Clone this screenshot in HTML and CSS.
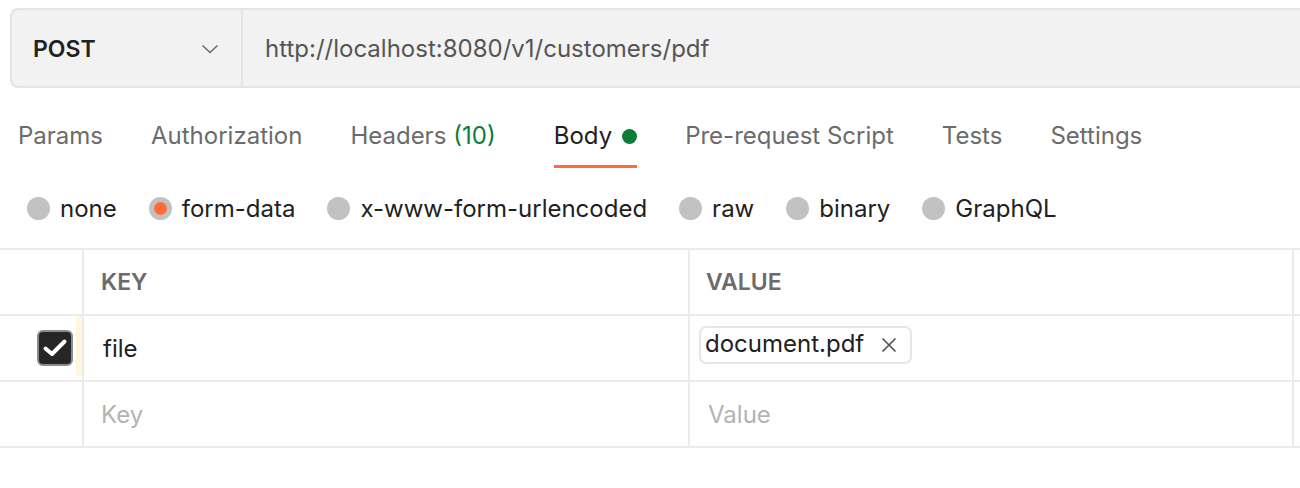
FILE: index.html
```html
<!DOCTYPE html>
<html>
<head>
<meta charset="utf-8">
<link rel="stylesheet" href="styles.css">
</head>
<body>
<div class="urlbar">
  <div class="method">
    <span class="method-name">POST</span>
    <svg class="chev" width="18" height="10" viewBox="0 0 18 10"><path d="M1.5 1.5 L9 8.5 L16.5 1.5" fill="none" stroke="#6b6b6b" stroke-width="1.6"/></svg>
  </div>
  <div class="url">http://localhost:8080/v1/customers/pdf</div>
</div>

<div class="tabs">
  <div class="tab">Params</div>
  <div class="tab">Authorization</div>
  <div class="tab headers">Headers <span class="count">(10)</span></div>
  <div class="tab active">Body <span class="dot"></span></div>
  <div class="tab">Pre-request Script</div>
  <div class="tab">Tests</div>
  <div class="tab">Settings</div>
</div>

<div class="radios">
  <label class="radio"><span class="circle"></span>none</label>
  <label class="radio"><span class="circle on"></span>form-data</label>
  <label class="radio"><span class="circle"></span>x-www-form-urlencoded</label>
  <label class="radio"><span class="circle"></span>raw</label>
  <label class="radio"><span class="circle"></span>binary</label>
  <label class="radio"><span class="circle"></span>GraphQL</label>
</div>

<div class="table">
  <div class="row head">
    <div class="cell c0"></div>
    <div class="cell c1">KEY</div>
    <div class="cell c2">VALUE</div>
    <div class="cell c3"></div>
  </div>
  <div class="row">
    <div class="cell c0"><span class="check"><svg width="26" height="20" viewBox="0 0 26 20"><path d="M3.5 10.5 L10 16 L22.5 3.5" fill="none" stroke="#fff" stroke-width="4" stroke-linecap="round" stroke-linejoin="round"/></svg></span><span class="strip"></span></div>
    <div class="cell c1 val">file</div>
    <div class="cell c2 chipcell"><span class="chip">document.pdf<svg class="x" width="16" height="16" viewBox="0 0 16 16"><path d="M1.5 1.5 L14.5 14.5 M14.5 1.5 L1.5 14.5" stroke="#555" stroke-width="1.7"/></svg></span></div>
    <div class="cell c3"></div>
  </div>
  <div class="row">
    <div class="cell c0"></div>
    <div class="cell c1 ph">Key</div>
    <div class="cell c2 ph">Value</div>
    <div class="cell c3"></div>
  </div>
</div>
</body>
</html>
```

FILE: styles.css
```css
* { box-sizing: border-box; }
body {
  margin: 0;
  background: #fff;
  font-family: Inter, "Noto Sans", "Liberation Sans", sans-serif;
  color: #212121;
  width: 1300px;
  overflow: hidden;
}
.urlbar {
  margin: 8px 0 0 10px;
  height: 80px;
  display: flex;
  background: #f2f2f2;
  border: 2px solid #e4e4e4;
  border-right: none;
  border-radius: 8px 0 0 8px;
}
.method {
  width: 231px;
  border-right: 2px solid #e4e4e4;
  display: flex;
  align-items: center;
  justify-content: space-between;
  padding: 2px 22px 0 21px;
}
.method-name {
  font-size: 23px;
  font-weight: 600;
  color: #212121;
}
.url {
  display: flex;
  align-items: center;
  padding-left: 22px;
  font-size: 24px;
  color: #555;
}
.tabs {
  display: flex;
  gap: 48px;
  padding: 33px 0 0 18px;
  height: 80px;
}
.tab {
  font-size: 24px;
  color: #6b6b6b;
  height: 47px;
  display: flex;
  align-items: flex-start;
  gap: 7px;
  border-bottom: 3px solid transparent;
}
.tab.headers { margin-right: 10px; }
.tab .count { color: #0b7d36; }
.tab.active {
  color: #212121;
  border-bottom-color: #ff6c37;
  gap: 10px;
}
.tab .dot {
  width: 15px;
  height: 15px;
  border-radius: 50%;
  background: #0b7d36;
  margin-top: 8px;
}
.radios {
  display: flex;
  align-items: center;
  padding-left: 27px;
  gap: 32px;
  height: 80px;
}
.radio {
  display: flex;
  align-items: center;
  font-size: 24px;
  color: #212121;
}
.circle {
  width: 23px;
  height: 23px;
  border-radius: 50%;
  background: #c2c2c2;
  margin-right: 10px;
  display: flex;
  align-items: center;
  justify-content: center;
}
.circle.on::after {
  content: "";
  width: 13px;
  height: 13px;
  border-radius: 50%;
  background: #ff6c37;
}
.table {
  border-top: 2px solid #ebebeb;
}
.row {
  display: flex;
  height: 66px;
  border-bottom: 2px solid #ebebeb;
}
.cell {
  display: flex;
  align-items: center;
  font-size: 24px;
}
.c0 {
  width: 84px;
  border-right: 2px solid #ebebeb;
  justify-content: flex-end;
  align-items: stretch;
}
.c1 {
  width: 606px;
  border-right: 2px solid #ebebeb;
  padding-left: 17px;
}
.c2 {
  width: 604px;
  border-right: 2px solid #ebebeb;
  padding-left: 16px;
}
.c3 { flex: 1; }
.head .cell { font-weight: 600; color: #6b6b6b; font-size: 23px; }
.val { padding-left: 19px; color: #212121; }
.ph { color: #b3b3b3; }
.ph.c2 { padding-left: 18px; }
.check {
  align-self: center;
  width: 36px;
  height: 36px;
  border-radius: 6px;
  background: #262626;
  border: 2px solid #8c8c8c;
  display: flex;
  align-items: center;
  justify-content: center;
  margin-right: 3px;
}
.strip {
  width: 6px;
  background: #fff6dc;
  margin: 0 0 4px 0;
}
.chipcell { padding-left: 9px; }
.chip {
  display: flex;
  align-items: center;
  height: 38px;
  padding: 0 13px 2px 4px;
  margin-bottom: 7px;
  border: 2px solid #e6e6e6;
  border-radius: 7px;
  color: #212121;
}
.chip .x { margin-left: 17px; margin-top: 2px; }
```
